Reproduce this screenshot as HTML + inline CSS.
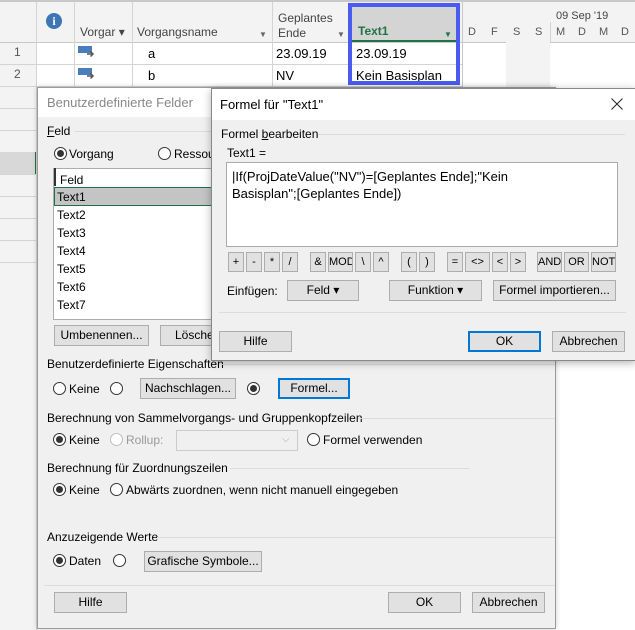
<!DOCTYPE html>
<html><head><meta charset="utf-8"><style>
*{margin:0;padding:0;box-sizing:border-box}
body{width:635px;height:630px;overflow:hidden;position:relative;background:#fff;font-family:"Liberation Sans",sans-serif;font-size:12px;color:#000}
.a{position:absolute;white-space:nowrap}
.vl{position:absolute;width:1px;background:#d4d4d4}
.hl{position:absolute;height:1px;background:#d4d4d4}
.btn{position:absolute;background:#e1e1e1;border:1px solid #adadad;text-align:center;font-size:12px;line-height:18px}
.rad{position:absolute;width:13px;height:13px;border:1px solid #333;border-radius:50%;background:#fff}
.rad.on::after{content:"";position:absolute;left:2px;top:2px;width:7px;height:7px;border-radius:50%;background:#333}
.rad.dis{border-color:#bcbcbc}
.sep{position:absolute;height:1px;background:#dcdcdc}
.ob{position:absolute;top:252px;height:20px;background:#e1e1e1;border:1px solid #adadad;text-align:center;font-size:11px;line-height:18px}
</style></head><body>
<div class="a" style="left:0;top:0;width:635px;height:42px;background:#f3f3f3;border-top:2px solid #c8c8c8"></div>
<div class="a" style="left:0;top:42px;width:36px;height:588px;background:#f3f3f3"></div>
<div class="hl" style="left:0;top:42px;width:635px;background:#c8c8c8"></div>
<div class="hl" style="left:0;top:64px;width:462px"></div>
<div class="hl" style="left:0;top:86px;width:462px"></div>
<div class="hl" style="left:0;top:108px;width:40px"></div>
<div class="hl" style="left:0;top:130px;width:40px"></div>
<div class="hl" style="left:0;top:174px;width:40px"></div>
<div class="hl" style="left:0;top:196px;width:40px"></div>
<div class="hl" style="left:0;top:218px;width:40px"></div>
<div class="hl" style="left:0;top:240px;width:40px"></div>
<div class="hl" style="left:0;top:262px;width:40px"></div>
<div class="a" style="left:0;top:152px;width:36px;height:22px;background:#d8d8d8"></div>
<div class="a" style="left:35px;top:152px;width:2px;height:22px;background:#217346"></div>
<div class="vl" style="left:36px;top:2px;height:628px"></div>
<div class="vl" style="left:74px;top:2px;height:86px"></div>
<div class="vl" style="left:132px;top:2px;height:86px"></div>
<div class="vl" style="left:272px;top:2px;height:86px"></div>
<div class="vl" style="left:462px;top:2px;height:86px;background:#c8c8c8"></div>
<div class="a" style="left:46px;top:13px;width:16px;height:16px;border-radius:50%;background:#3c76b4;color:#fff;font-weight:bold;font-size:12px;text-align:center;line-height:16px;font-family:'Liberation Serif',serif">i</div>
<div class="a" style="left:80px;top:25px;color:#444">Vorgar ▾</div>
<div class="a" style="left:137px;top:25px;color:#444">Vorgangsname</div>
<div class="a" style="left:259px;top:30px;color:#666;font-size:8px">▼</div>
<div class="a" style="left:278px;top:11px;color:#444;line-height:15px">Geplantes<br>Ende</div>
<div class="a" style="left:337px;top:30px;color:#666;font-size:8px">▼</div>
<div class="a" style="left:350px;top:3px;width:108px;height:39px;background:#d4d4d4;border-bottom:2px solid #217346"></div>
<div class="a" style="left:358px;top:24px;color:#217346;font-weight:bold">Text1</div>
<div class="a" style="left:444px;top:30px;color:#217346;font-size:8px">▼</div>
<div class="a" style="left:556px;top:10px;color:#444;font-size:11px">09 Sep '19</div>
<div class="a" style="left:468px;top:26px;color:#555;font-size:11px">D</div>
<div class="a" style="left:491px;top:26px;color:#555;font-size:11px">F</div>
<div class="a" style="left:513px;top:26px;color:#555;font-size:11px">S</div>
<div class="a" style="left:535px;top:26px;color:#555;font-size:11px">S</div>
<div class="a" style="left:556px;top:26px;color:#555;font-size:11px">M</div>
<div class="a" style="left:578px;top:26px;color:#555;font-size:11px">D</div>
<div class="a" style="left:599px;top:26px;color:#555;font-size:11px">M</div>
<div class="a" style="left:621px;top:26px;color:#555;font-size:11px">D</div>
<div class="vl" style="left:550px;top:22px;height:20px"></div>
<div class="a" style="left:506px;top:42px;width:44px;height:46px;background:#f3f3f3"></div>
<div class="a" style="left:14px;top:45px;color:#555">1</div>
<div class="a" style="left:14px;top:67px;color:#555">2</div>
<svg class="a" style="left:78px;top:45px" width="18" height="14"><rect x="0" y="1" width="14" height="7" fill="#4a7ebb"/><path d="M9 9h6M12.5 6.5l2.5 2.5-2.5 2.5" stroke="#555" stroke-width="1.5" fill="none"/></svg>
<svg class="a" style="left:78px;top:67px" width="18" height="14"><rect x="0" y="1" width="14" height="7" fill="#4a7ebb"/><path d="M9 9h6M12.5 6.5l2.5 2.5-2.5 2.5" stroke="#555" stroke-width="1.5" fill="none"/></svg>
<div class="a" style="left:148px;top:46px;font-size:13px">a</div>
<div class="a" style="left:148px;top:68px;font-size:13px">b</div>
<div class="a" style="left:276px;top:46px;font-size:13px">23.09.19</div>
<div class="a" style="left:276px;top:68px;font-size:13px">NV</div>
<div class="a" style="left:356px;top:46px;font-size:13px">23.09.19</div>
<div class="a" style="left:356px;top:68px;font-size:13px">Kein Basisplan</div>
<div class="a" style="left:348px;top:3px;width:112px;height:82px;border:4px solid #4a5cf0"></div>

<div class="a" style="left:37px;top:87px;width:519px;height:542px;background:#f0f0f0;border:1px solid #9a9a9a;box-shadow:0 0 5px rgba(0,0,0,.2)"></div>
<div class="a" style="left:38px;top:88px;width:517px;height:29px;background:#fff"></div>
<div class="a" style="left:47px;top:95px;color:#888;font-size:13px">Benutzerdefinierte Felder</div>
<div class="a" style="left:47px;top:124px"><u>F</u>eld</div>
<div class="sep" style="left:74px;top:131px;width:140px"></div>
<div class="rad on" style="left:54px;top:147px"></div><div class="a" style="left:69px;top:147px">Vorgang</div>
<div class="rad" style="left:158px;top:147px"></div><div class="a" style="left:174px;top:147px">Ressou</div>
<div class="a" style="left:53px;top:168px;width:170px;height:152px;background:#fff;border:1px solid #adadad"></div>
<div class="a" style="left:54px;top:168px;width:2px;height:18px;background:#333"></div>
<div class="a" style="left:60px;top:173px">Feld</div>
<div class="a" style="left:54px;top:187px;width:170px;height:19px;background:#c4c4c4;border:1px solid #217346;border-right:none"></div>
<div class="a" style="left:57px;top:190px">Text1</div>
<div class="a" style="left:57px;top:208px">Text2</div>
<div class="a" style="left:57px;top:226px">Text3</div>
<div class="a" style="left:57px;top:244px">Text4</div>
<div class="a" style="left:57px;top:262px">Text5</div>
<div class="a" style="left:57px;top:280px">Text6</div>
<div class="a" style="left:57px;top:298px">Text7</div>
<div class="btn" style="left:54px;top:325px;width:95px;height:21px">Umbenennen...</div>
<div class="btn" style="left:160px;top:325px;width:60px;height:21px;text-align:left;padding-left:14px">Lösche</div>

<div class="a" style="left:47px;top:357px">Benutzerdefinierte Eigenschaften</div>
<div class="sep" style="left:222px;top:364px;width:333px"></div>
<div class="rad" style="left:53px;top:382px"></div><div class="a" style="left:69px;top:382px">Keine</div>
<div class="rad" style="left:110px;top:382px"></div>
<div class="btn" style="left:140px;top:378px;width:96px;height:21px">Nachschlagen...</div>
<div class="rad on" style="left:247px;top:382px"></div>
<div class="btn" style="left:278px;top:378px;width:72px;height:21px;border:2px solid #0078d7;line-height:17px">Formel...</div>

<div class="a" style="left:47px;top:411px">Berechnung von Sammelvorgangs- und Gruppenkopfzeilen</div>
<div class="sep" style="left:358px;top:418px;width:197px"></div>
<div class="rad on" style="left:53px;top:433px"></div><div class="a" style="left:69px;top:433px">Keine</div>
<div class="rad dis" style="left:110px;top:433px"></div><div class="a" style="left:126px;top:433px;color:#999">Rollup:</div>
<div class="a" style="left:176px;top:430px;width:122px;height:21px;background:#f0f0f0;border:1px solid #ccc"></div>
<div class="a" style="left:282px;top:434px;color:#aaa;font-size:10px">⌵</div>
<div class="rad" style="left:307px;top:433px"></div><div class="a" style="left:323px;top:433px">Formel verwenden</div>

<div class="a" style="left:47px;top:461px">Berechnung für Zuordnungszeilen</div>
<div class="sep" style="left:230px;top:468px;width:240px"></div>
<div class="rad on" style="left:53px;top:483px"></div><div class="a" style="left:69px;top:483px">Keine</div>
<div class="rad" style="left:110px;top:483px"></div><div class="a" style="left:126px;top:483px">Abwärts zuordnen, wenn nicht manuell eingegeben</div>

<div class="a" style="left:47px;top:530px">Anzuzeigende Werte</div>
<div class="sep" style="left:157px;top:537px;width:398px"></div>
<div class="rad on" style="left:53px;top:554px"></div><div class="a" style="left:69px;top:554px">Daten</div>
<div class="rad" style="left:113px;top:554px"></div>
<div class="btn" style="left:144px;top:551px;width:118px;height:21px">Grafische Symbole...</div>
<div class="sep" style="left:44px;top:585px;width:511px"></div>
<div class="btn" style="left:54px;top:592px;width:73px;height:21px">Hilfe</div>
<div class="btn" style="left:388px;top:592px;width:73px;height:21px">OK</div>
<div class="btn" style="left:472px;top:592px;width:73px;height:21px">Abbrechen</div>

<div class="a" style="left:211px;top:88px;width:425px;height:273px;background:#f0f0f0;border:1px solid #888;box-shadow:0 2px 8px rgba(0,0,0,.3)"></div>
<div class="a" style="left:212px;top:89px;width:423px;height:31px;background:#fff"></div>
<div class="a" style="left:220px;top:97px;font-size:13px">Formel für "Text1"</div>
<svg class="a" style="left:611px;top:98px" width="12" height="12"><path d="M0.5 0.5L11.5 11.5M11.5 0.5L0.5 11.5" stroke="#222" stroke-width="1"/></svg>
<div class="a" style="left:221px;top:127px">Formel <u>b</u>earbeiten</div>
<div class="sep" style="left:318px;top:134px;width:307px"></div>
<div class="a" style="left:227px;top:146px">Text1 =</div>
<div class="a" style="left:226px;top:162px;width:392px;height:85px;background:#fff;border:1px solid #aaa"></div>
<div class="a" style="left:232px;top:168px;font-size:13px;line-height:17px">|If(ProjDateValue("NV")=[Geplantes Ende];"Kein<br>Basisplan";[Geplantes Ende])</div>
<div class="ob" style="left:228px;width:16px">+</div>
<div class="ob" style="left:246px;width:16px">-</div>
<div class="ob" style="left:264px;width:16px">*</div>
<div class="ob" style="left:282px;width:16px">/</div>
<div class="ob" style="left:310px;width:16px">&amp;</div>
<div class="ob" style="left:328px;width:25px;overflow:hidden">MOD</div>
<div class="ob" style="left:355px;width:16px">\</div>
<div class="ob" style="left:373px;width:16px">^</div>
<div class="ob" style="left:401px;width:16px">(</div>
<div class="ob" style="left:419px;width:16px">)</div>
<div class="ob" style="left:447px;width:16px">=</div>
<div class="ob" style="left:465px;width:25px">&lt;&gt;</div>
<div class="ob" style="left:492px;width:16px">&lt;</div>
<div class="ob" style="left:510px;width:16px">&gt;</div>
<div class="ob" style="left:537px;width:25px">AND</div>
<div class="ob" style="left:564px;width:25px">OR</div>
<div class="ob" style="left:591px;width:25px">NOT</div>
<div class="a" style="left:227px;top:284px">Einfügen:</div>
<div class="btn" style="left:287px;top:280px;width:72px;height:21px">Feld ▾</div>
<div class="btn" style="left:389px;top:280px;width:93px;height:21px">Funktion ▾</div>
<div class="btn" style="left:493px;top:280px;width:123px;height:21px">Formel importieren...</div>
<div class="sep" style="left:219px;top:312px;width:407px"></div>
<div class="btn" style="left:219px;top:331px;width:73px;height:21px">Hilfe</div>
<div class="btn" style="left:468px;top:331px;width:73px;height:21px;border:2px solid #0078d7;line-height:17px">OK</div>
<div class="btn" style="left:552px;top:331px;width:73px;height:21px">Abbrechen</div>
</body></html>
